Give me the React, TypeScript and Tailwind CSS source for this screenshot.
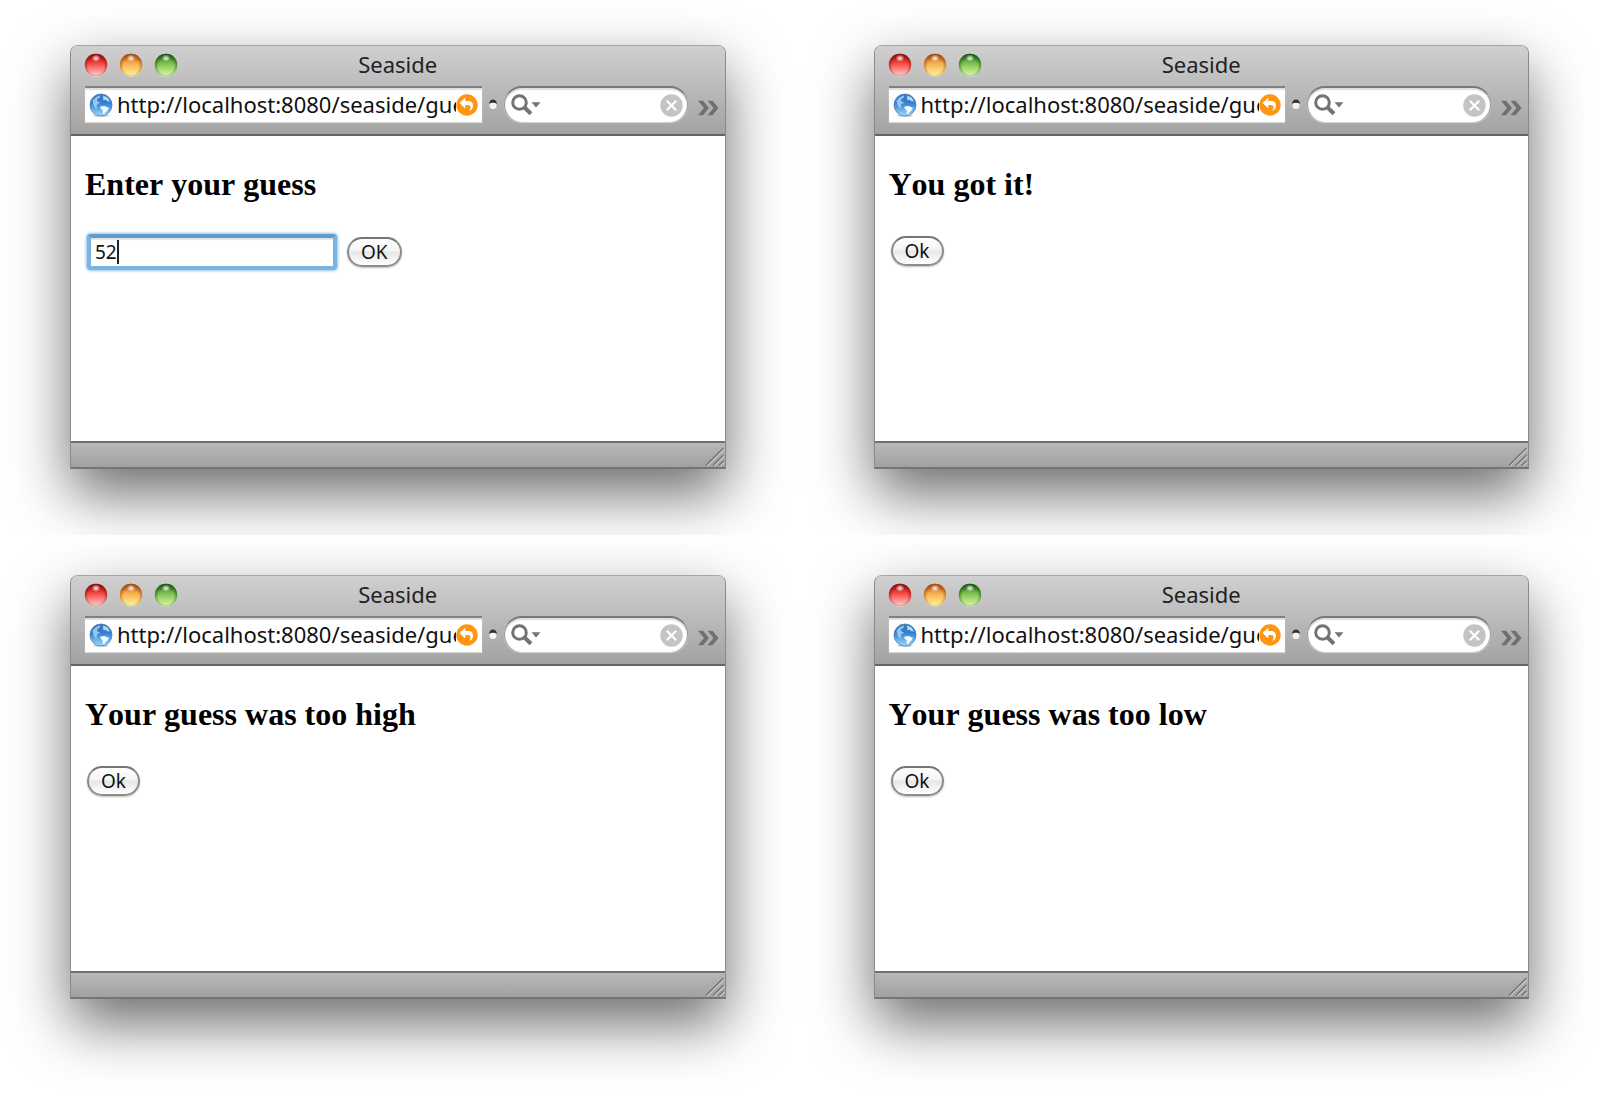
import { useId } from "react";

function Light({ name, rim, mid, glow }: { name: string; rim: string; mid: string; glow: string }) {
  const id = useId();
  return (
    <button type="button" aria-label={name} className="size-6">
      <svg viewBox="0 0 24 24" className="size-6">
        <defs>
          <linearGradient id={id + "a"} x1="0" y1="0" x2="0" y2="1">
            <stop offset="0" stopColor={rim} />
            <stop offset="0.4" stopColor={mid} />
            <stop offset="1" stopColor={glow} />
          </linearGradient>
          <radialGradient id={id + "b"} cx="0.5" cy="0.58" r="0.56">
            <stop offset="0.6" stopColor={rim} stopOpacity="0" />
            <stop offset="1" stopColor={rim} stopOpacity="0.75" />
          </radialGradient>
          <radialGradient id={id + "c"}>
            <stop offset="0" stopColor="#fff" stopOpacity="0.95" />
            <stop offset="1" stopColor="#fff" stopOpacity="0" />
          </radialGradient>
        </defs>
        <circle cx="12" cy="12.8" r="11.2" fill="#fff" opacity="0.35" />
        <circle cx="12" cy="12" r="11.2" fill={`url(#${id}a)`} />
        <circle cx="12" cy="12" r="11.2" fill={`url(#${id}b)`} />
        <ellipse cx="12" cy="5.2" rx="4.5" ry="3.6" fill={`url(#${id}c)`} />
      </svg>
    </button>
  );
}

function Globe() {
  const id = useId();
  return (
    <svg viewBox="0 0 24 24" className="size-6 shrink-0" aria-hidden="true">
      <defs>
        <linearGradient id={id} x1="0" y1="0" x2="0" y2="1">
          <stop offset="0" stopColor="#3c78bd" />
          <stop offset="0.4" stopColor="#2f80d2" />
          <stop offset="1" stopColor="#9cdcfb" />
        </linearGradient>
      </defs>
      <ellipse cx="12" cy="22.6" rx="8" ry="1.2" fill="#9aa7b5" opacity="0.6" />
      <circle cx="12" cy="12" r="11" fill={`url(#${id})`} stroke="#4a7db5" strokeWidth="0.8" />
      <path d="M3.500 8Q6 3.500 11 2.500L10.500 5 8 6l.5 2.500 3 1.200L8.500 11l-1 2.500 1 2-2.500-.8-1.500-2.700Z" fill="#a9d0f2" opacity="0.85" />
      <path d="M14 2.500 18.500 4.500 21 8.500l-2.600-.3-1.800-1.400-2.200.4Z" fill="#d9edfb" opacity="0.8" />
      <path d="m11.500 13.500 4-.5 4.500 2-2 3-2 1.400-.8 2.600-1.600-2.400.2-2.200-2.300-1.800Z" fill="#f2fbff" />
    </svg>
  );
}

function AddressBar() {
  return (
    <div className="flex h-9 min-w-0 flex-1 items-center border-t-2 border-[#808080] bg-white pr-1 pl-1 shadow-[0_1px_1px_rgba(255,255,255,0.5),inset_0_2px_1px_#dedede]">
      <Globe />
      <input
        type="text"
        aria-label="Address"
        defaultValue="http://localhost:8080/seaside/guess"
        className="ml-1 h-8 min-w-0 flex-1 bg-transparent pb-0.5 text-[22px] text-[#111] outline-none"
      />
      <button type="button" aria-label="Snap back" className="size-[22px] shrink-0">
        <svg viewBox="0 0 22 22" className="size-[22px]">
          <circle cx="11" cy="11" r="10.7" fill="#ff9510" />
          <path d="M3.5 9 9.3 3.7v3.4h2.9c3.2 0 4.8 2 4.8 4.8 0 2.5-1.4 4.3-4.6 5.1 1.5-1 2.2-2.2 2.2-3.5 0-1.8-1.1-2.5-3-2.5H9.3v3.5Z" fill="#fff" />
        </svg>
      </button>
    </div>
  );
}

function SearchField() {
  return (
    <div className="flex h-9 w-[184px] shrink-0 items-center rounded-full border-t-2 border-r border-l border-t-[#787878] border-r-[#999] border-l-[#999] bg-white pr-1 pl-1.5 shadow-[0_1px_1px_rgba(255,255,255,0.5),inset_0_2px_1px_#dedede]">
      <svg viewBox="0 0 30 24" className="h-6 w-[30px] shrink-0" aria-hidden="true">
        <circle cx="8.5" cy="9.5" r="6.8" fill="none" stroke="#737373" strokeWidth="3" />
        <path d="m13.3 14.3 6.7 6.5" stroke="#737373" strokeWidth="4" />
        <path d="M20.5 9.2h9l-4.5 5.3Z" fill="#737373" />
      </svg>
      <input type="text" aria-label="Search" className="h-8 min-w-0 flex-1 bg-transparent text-[22px] outline-none" />
      <button type="button" aria-label="Clear search" className="size-[23px] shrink-0">
        <svg viewBox="0 0 23 23" className="size-[23px]">
          <circle cx="11.5" cy="11.5" r="11.2" fill="#c4c4c4" />
          <path d="m6.8 6.8 9.400 9.400m0-9.400-9.400 9.400" stroke="#fff" strokeWidth="2.2" />
        </svg>
      </button>
    </div>
  );
}

function AquaButton({ children }: { children: string }) {
  return (
    <button
      type="submit"
      className="h-[30px] rounded-full border-2 border-[#8c8c8c] border-t-[#767676] bg-[linear-gradient(#ffffff,#f4f4f4_45%,#e6e6e6_50%,#ffffff)] px-3 text-[19px] leading-6 text-[#111] shadow-[0_1px_2px_rgba(0,0,0,0.25)]"
    >
      {children}
    </button>
  );
}

function GuessField() {
  return (
    <div className="relative">
      <input
        type="text"
        aria-label="Guess"
        defaultValue="52"
        className="block h-9 w-[250px] rounded-sm border-4 border-[#7ab4e3] border-t-[#5f9ccf] bg-white px-1 text-[19px] text-[#111] caret-transparent shadow-[0_0_3px_1px_#8fc3ee,inset_0_2px_1px_#e4e4e4] outline-none"
      />
      <span className="absolute top-1.5 left-[30px] h-6 w-0.5 bg-[#222]" />
    </div>
  );
}

function BrowserWindow({ heading, entry }: { heading: string; entry?: boolean }) {
  return (
    <div className="h-[530px] px-[70px] pt-10">
      <section className="flex h-[424px] flex-col overflow-hidden rounded-t-lg border border-b-2 border-[#8a8a8a] border-t-[#a5a5a5] border-b-[#757575] bg-white shadow-[0_25px_58px_rgba(0,0,0,0.58)]">
        <header className="h-[90px] shrink-0 border-b-2 border-[#666] bg-linear-to-b from-[#d0d0d0] to-[#a3a3a3]">
          <div className="relative flex h-10 items-center gap-[11px] pb-0.5 pl-[13px]">
            <Light name="Close" rim="#8e1010" mid="#f8423c" glow="#ffd0d0" />
            <Light name="Minimize" rim="#a34a10" mid="#f7aa4c" glow="#fff79a" />
            <Light name="Zoom" rim="#1d5c10" mid="#7abd4f" glow="#dcfaa6" />
            <h1 className="pointer-events-none absolute inset-x-0 top-0.5 text-center text-[22px] leading-8 text-[#222]">Seaside</h1>
          </div>
          <div className="flex items-center pr-1.5 pl-3.5">
            <AddressBar />
            <svg viewBox="0 0 8 12" className="mx-[7px] h-3 w-2 shrink-0" aria-hidden="true">
              <circle cx="4" cy="7.4" r="3.5" fill="#f5f5f5" />
              <path d="M0 6Q.6 1.500 4 1.500T8 6Q6.500 4.700 4 4.700T0 6Z" fill="#333" />
            </svg>
            <SearchField />
            <button type="button" aria-label="More toolbar items" className="mt-2 ml-2.5 h-4 w-[21px] shrink-0">
              <svg viewBox="0 0 21 16" className="h-4 w-[21px]">
                <path d="M0 .8h5L11 8l-6 7.200H0L6 8Zm9.500 0h5L20.500 8l-6 7.200h-5l6-7.200Z" fill="#707070" />
              </svg>
            </button>
          </div>
        </header>
        <form className="min-h-0 flex-1 px-3.5 pt-7" onSubmit={(e) => e.preventDefault()}>
          <h2 className="font-['Liberation_Serif',serif] text-[32px] leading-10 font-bold text-black [font-kerning:none]">{heading}</h2>
          {entry ? (
            <div className="mt-[30px] flex items-center gap-2.5 pl-0.5">
              <GuessField />
              <AquaButton>OK</AquaButton>
            </div>
          ) : (
            <div className="mt-8 flex pl-0.5">
              <AquaButton>Ok</AquaButton>
            </div>
          )}
        </form>
        <footer className="flex h-[26px] shrink-0 items-end justify-end border-t-2 border-[#707070] bg-linear-to-b from-[#b8b8b8] to-[#a1a1a1]">
          <svg viewBox="0 0 20 20" className="size-5" aria-hidden="true">
            <path d="M2 19 19 2M9 19 19 9m-4 10 4-4" stroke="#d0d0d0" strokeWidth="1.500" />
            <path d="M1 18.500 18.500 1M8 18.500 18.500 8m-4.500 10.500 4.500-4.500" stroke="#747474" strokeWidth="1.500" />
          </svg>
        </footer>
      </section>
    </div>
  );
}

export default function App() {
  return (
    <main className="min-h-screen overflow-hidden bg-white pt-[5px] font-['Noto_Sans','Open_Sans',sans-serif]">
      <div className="grid grid-cols-2 gap-x-2 overflow-hidden">
        <BrowserWindow heading="Enter your guess" entry />
        <BrowserWindow heading="You got it!" />
      </div>
      <div className="grid grid-cols-2 gap-x-2">
        <BrowserWindow heading="Your guess was too high" />
        <BrowserWindow heading="Your guess was too low" />
      </div>
    </main>
  );
}
